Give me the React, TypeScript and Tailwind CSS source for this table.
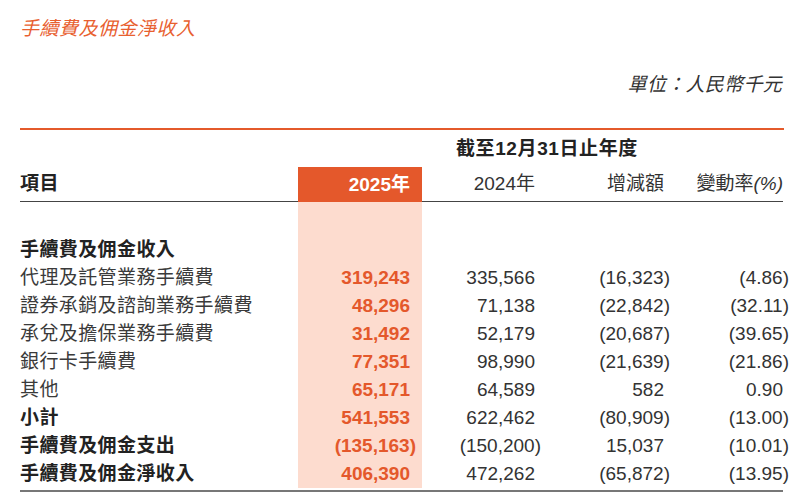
import React from "react";

const FONT = { fontFamily: '"Liberation Sans", "Noto Sans CJK TC", sans-serif' };

type Row = { label: string; bold?: boolean; v: string[] };

const rows: Row[] = [
  { label: "代理及託管業務手續費", v: ["319,243", "335,566", "(16,323)", "(4.86)"] },
  { label: "證券承銷及諮詢業務手續費", v: ["48,296", "71,138", "(22,842)", "(32.11)"] },
  { label: "承兌及擔保業務手續費", v: ["31,492", "52,179", "(20,687)", "(39.65)"] },
  { label: "銀行卡手續費", v: ["77,351", "98,990", "(21,639)", "(21.86)"] },
  { label: "其他", v: ["65,171", "64,589", "582", "0.90"] },
  { label: "小計", bold: true, v: ["541,553", "622,462", "(80,909)", "(13.00)"] },
  { label: "手續費及佣金支出", bold: true, v: ["(135,163)", "(150,200)", "15,037", "(10.01)"] },
  { label: "手續費及佣金淨收入", bold: true, v: ["406,390", "472,262", "(65,872)", "(13.95)"] },
];

function Num({ s }: { s: string }) {
  if (s.endsWith(")")) {
    return (
      <span>
        {s.slice(0, -1)}
        <span className="-mr-[6px]">)</span>
      </span>
    );
  }
  return <span>{s}</span>;
}

const GRID = "grid grid-cols-[278px_124px_113px_129px_119px]";

export default function App() {
  return (
    <div className="w-[804px] h-[498px] bg-white overflow-hidden text-[19px] text-[#333]" style={FONT}>
      <div className="pt-[15px] pl-[20px] h-[71px] leading-[28px] italic text-[#e8602f] tracking-[0.5px]">
        手續費及佣金淨收入
      </div>
      <div className="h-[57px] flex justify-end pr-[22px] leading-[28px] italic text-[#333] tracking-[0.3px]">
        單位：人民幣千元
      </div>
      <div className="mx-[20px] h-[2px] bg-[#e45a2b]" />
      <div className="mx-[20px] h-[37px] flex items-center pt-[2px] pl-[436px] font-bold text-[#222] tracking-[0.6px]">
        截至12月31日止年度
      </div>
      <div className={`${GRID} mx-[20px] h-[35px]`}>
        <div className="flex items-center border-b-[1.5px] border-[#444] font-bold text-[#222] pt-[1px] tracking-[0.4px]">項目</div>
        <div className="flex items-center justify-end pr-[12px] bg-[#e4582b] text-white font-bold pt-[1px]">2025年</div>
        <div className="flex items-center justify-end border-b-[1.5px] border-[#444] pt-[1px]">2024年</div>
        <div className="flex items-center justify-end border-b-[1.5px] border-[#444] pt-[1px]">增減額</div>
        <div className="flex items-center justify-end border-b-[1.5px] border-[#444] pt-[1px]">
          變動率<span className="italic">(%)</span>
        </div>
      </div>
      <div className={`${GRID} mx-[20px] h-[34px]`}>
        <div />
        <div className="bg-[#fddccf]" />
      </div>
      <div className={`${GRID} mx-[20px] h-[28px] leading-[28px]`}>
        <div className="font-bold text-[#222] tracking-[0.4px]">手續費及佣金收入</div>
        <div className="bg-[#fddccf]" />
      </div>
      {rows.map((r) => (
        <div key={r.label} className={`${GRID} mx-[20px] h-[28px] leading-[28px]`}>
          <div className={r.bold ? "font-bold text-[#222] tracking-[0.4px]" : "text-[#3a3a3a] tracking-[0.4px]"}>{r.label}</div>
          <div className="bg-[#fddccf] text-right pr-[12px] font-bold text-[#e4582b]">
            <Num s={r.v[0]} />
          </div>
          <div className="text-right"><Num s={r.v[1]} /></div>
          <div className="text-right"><Num s={r.v[2]} /></div>
          <div className="text-right"><Num s={r.v[3]} /></div>
        </div>
      ))}
      <div className={`${GRID} mx-[20px] h-[2px] mt-[2px]`}>
        <div className="bg-[#777] col-span-5" />
      </div>
    </div>
  );
}
